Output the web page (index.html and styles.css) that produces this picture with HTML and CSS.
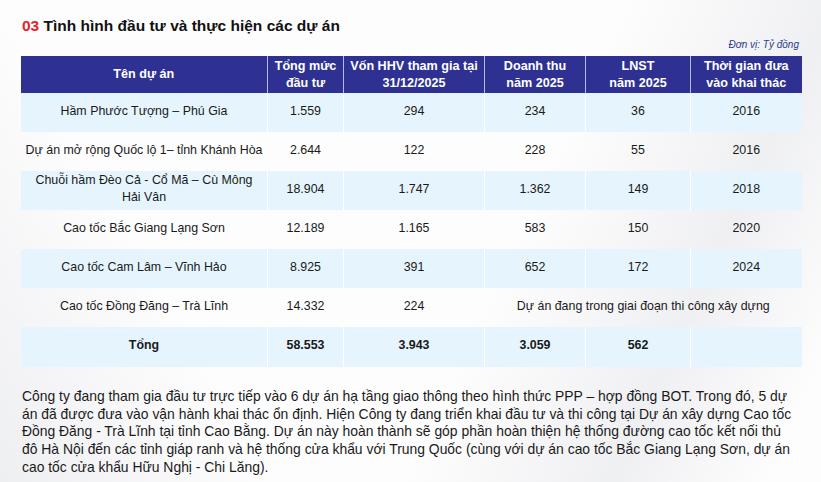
FILE: index.html
```html
<!DOCTYPE html>
<html lang="vi">
<head>
<meta charset="utf-8">
<link rel="stylesheet" href="styles.css">
</head>
<body>
<div class="page">
  <h1 class="title"><span class="num">03</span> Tình hình đầu tư và thực hiện các dự án</h1>
  <div class="unit">Đơn vị: Tỷ đồng</div>
  <table class="tbl">
    <colgroup>
      <col class="c1"><col class="c2"><col class="c3"><col class="c4"><col class="c5"><col class="c6">
    </colgroup>
    <thead>
      <tr>
        <th>Tên dự án</th>
        <th>Tổng mức<br>đầu tư</th>
        <th>Vốn HHV tham gia tại<br>31/12/2025</th>
        <th>Doanh thu<br>năm 2025</th>
        <th>LNST<br>năm 2025</th>
        <th>Thời gian đưa<br>vào khai thác</th>
      </tr>
    </thead>
    <tbody>
      <tr class="alt"><td>Hầm Phước Tượng – Phú Gia</td><td>1.559</td><td>294</td><td>234</td><td>36</td><td>2016</td></tr>
      <tr><td>Dự án mở rộng Quốc lộ 1– tỉnh Khánh Hòa</td><td>2.644</td><td>122</td><td>228</td><td>55</td><td>2016</td></tr>
      <tr class="alt"><td>Chuỗi hầm Đèo Cả - Cổ Mã – Cù Mông<br>Hải Vân</td><td>18.904</td><td>1.747</td><td>1.362</td><td>149</td><td>2018</td></tr>
      <tr><td>Cao tốc Bắc Giang Lạng Sơn</td><td>12.189</td><td>1.165</td><td>583</td><td>150</td><td>2020</td></tr>
      <tr class="alt"><td>Cao tốc Cam Lâm – Vĩnh Hảo</td><td>8.925</td><td>391</td><td>652</td><td>172</td><td>2024</td></tr>
      <tr><td>Cao tốc Đồng Đăng – Trà Lĩnh</td><td>14.332</td><td>224</td><td colspan="3">Dự án đang trong giai đoạn thi công xây dựng</td></tr>
      <tr class="alt total"><td>Tổng</td><td>58.553</td><td>3.943</td><td>3.059</td><td>562</td><td></td></tr>
    </tbody>
  </table>
  <p class="desc">Công ty đang tham gia đầu tư trực tiếp vào 6 dự án hạ tầng giao thông theo hình thức PPP – hợp đồng BOT. Trong đó, 5 dự án đã được đưa vào vận hành khai thác ổn định. Hiện Công ty đang triển khai đầu tư và thi công tại Dự án xây dựng Cao tốc Đồng Đăng - Trà Lĩnh tại tỉnh Cao Bằng. Dự án này hoàn thành sẽ góp phần hoàn thiện hệ thống đường cao tốc kết nối thủ đô Hà Nội đến các tỉnh giáp ranh và hệ thống cửa khẩu với Trung Quốc (cùng với dự án cao tốc Bắc Giang Lạng Sơn, dự án cao tốc cửa khẩu Hữu Nghị - Chi Lăng).</p>
</div>
</body>
</html>
```

FILE: styles.css
```css
html, body {
  margin: 0;
  padding: 0;
}
body {
  width: 821px;
  height: 482px;
  overflow: hidden;
  font-family: "Liberation Sans", Arial, sans-serif;
  color: #1a1a1a;
  background:
    linear-gradient(115deg, rgba(255,255,255,0) 60%, rgba(230,231,235,0.6) 80%, rgba(255,255,255,0) 95%),
    linear-gradient(60deg, rgba(232,233,237,0.7) 0%, rgba(255,255,255,0) 25%),
    #fdfdfd;
}
.page {
  padding: 16px 20px 0 20px;
}
.title {
  margin: 0 0 0 2px;
  font-size: 15.5px;
  font-weight: bold;
  line-height: 20px;
  color: #111;
}
.num {
  color: #e4232b;
  font-weight: bold;
}
.unit {
  text-align: right;
  font-style: italic;
  font-size: 10px;
  color: #2b3a8c;
  margin: 3px 2px 5px 0;
  line-height: 12px;
}
.tbl {
  width: 781px;
  border-collapse: collapse;
  table-layout: fixed;
  font-size: 12.4px;
}
.c1 { width: 247px; }
.c2 { width: 76px; }
.c3 { width: 141px; }
.c4 { width: 101px; }
.c5 { width: 105px; }
.c6 { width: 111px; }
.tbl th {
  background: #2e3192;
  color: #fff;
  font-weight: bold;
  font-size: 12.6px;
  height: 37px;
  padding: 0 2px;
  line-height: 16.5px;
  border-left: 1px solid #b8badf;
  vertical-align: middle;
}
.tbl th:first-child { border-left: none; }
.tbl td {
  height: 39px;
  padding: 0 2px 3px 2px;
  box-sizing: border-box;
  text-align: center;
  line-height: 17px;
  vertical-align: middle;
  border-left: 1px solid transparent;
}
.tbl tr.alt td {
  background: #e6f5fd;
  border-left-color: #ffffff;
}
.tbl tr.alt td:first-child { border-left-color: transparent; }
.tbl tr.total td {
  font-weight: bold;
  height: 40px;
}
.desc {
  margin: 21px 4px 0 2px;
  font-size: 13.9px;
  line-height: 17.7px;
  color: #1a1a1a;
}
```
